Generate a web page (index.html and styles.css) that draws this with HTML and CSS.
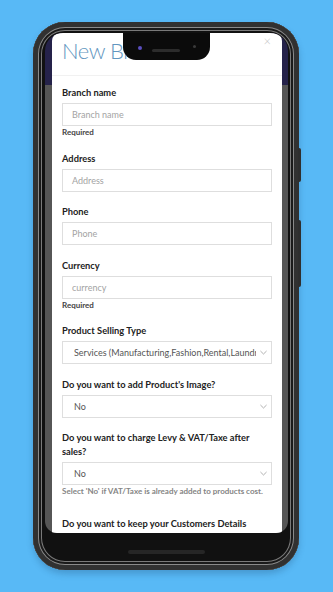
FILE: index.html
```html
<!DOCTYPE html>
<html>
<head>
<meta charset="utf-8">
<link rel="stylesheet" href="styles.css">
</head>
<body>
<div class="stage">
  <div class="phone">
    <span class="btn btn-top"></span>
    <span class="btn btn-bottom"></span>
    <div class="screen">
      <div class="notch">
        <span class="cam"></span>
        <span class="speaker"></span>
        <span class="sensor"></span>
      </div>
      <div class="modal">
        <div class="modal-header">
          <h1 class="title">New Branch</h1>
          <span class="close">×</span>
        </div>
        <div class="modal-body">
          <div class="group">
            <div class="label">Branch name</div>
            <div class="input placeholder">Branch name</div>
            <div class="req">Required</div>
          </div>
          <div class="group">
            <div class="label">Address</div>
            <div class="input placeholder">Address</div>
          </div>
          <div class="group">
            <div class="label">Phone</div>
            <div class="input placeholder">Phone</div>
          </div>
          <div class="group">
            <div class="label">Currency</div>
            <div class="input placeholder">currency</div>
            <div class="req">Required</div>
          </div>
          <div class="group">
            <div class="label">Product Selling Type</div>
            <div class="input select"><span class="val">Services (Manufacturing,Fashion,Rental,Laundry)</span><svg class="chev" viewBox="0 0 8 5" width="7" height="5"><path d="M0.5 0.8 L4 4.2 L7.5 0.8" fill="none" stroke="#9a9a9a" stroke-width="0.9"/></svg></div>
          </div>
          <div class="group">
            <div class="label">Do you want to add Product's Image?</div>
            <div class="input select"><span class="val">No</span><svg class="chev" viewBox="0 0 8 5" width="7" height="5"><path d="M0.5 0.8 L4 4.2 L7.5 0.8" fill="none" stroke="#9a9a9a" stroke-width="0.9"/></svg></div>
          </div>
          <div class="group group-help">
            <div class="label">Do you want to charge Levy &amp; VAT/Taxe after sales?</div>
            <div class="input select"><span class="val">No</span><svg class="chev" viewBox="0 0 8 5" width="7" height="5"><path d="M0.5 0.8 L4 4.2 L7.5 0.8" fill="none" stroke="#9a9a9a" stroke-width="0.9"/></svg></div>
            <div class="help">Select 'No' if VAT/Taxe is already added to products cost.</div>
          </div>
          <div class="group">
            <div class="label">Do you want to keep your Customers Details before selling to them?</div>
            <div class="input select"><span class="val">No</span></div>
          </div>
        </div>
      </div>
    </div>
    <div class="chin"><span class="home"></span></div>
  </div>
</div>
</body>
</html>
```

FILE: styles.css
```css
html, body {
  margin: 0;
  padding: 0;
}
body {
  width: 333px;
  height: 592px;
  overflow: hidden;
  background: #58b9f6;
  font-family: "Lato", "Noto Sans", sans-serif;
}
.stage {
  padding: 22px 0 0 33px;
}
.phone {
  position: relative;
  box-sizing: border-box;
  width: 266px;
  height: 548px;
  border-radius: 32px;
  background: #111;
  padding: 11px 11px 0 12px;
  display: flex;
  flex-direction: column;
  box-shadow:
    inset 0 0 0 5px #313131,
    inset 0 0 0 6px #8a8a8a,
    inset 0 0 0 8px #1a1a1a,
    inset 0 0 0 9px #7a7a7a,
    0 4px 6px rgba(20, 60, 100, 0.25);
}
.btn {
  position: absolute;
  right: -2px;
  width: 3px;
  background: #2e2e2e;
  border-radius: 0 2px 2px 0;
}
.btn-top { top: 126px; height: 34px; }
.btn-bottom { top: 198px; height: 67px; }
.screen {
  position: relative;
  flex: 0 0 500px;
  overflow: hidden;
  border-radius: 18px 18px 12px 12px;
  background: linear-gradient(#25224a 0 52px, #565656 52px);
}
.notch {
  position: absolute;
  top: 0;
  left: 78px;
  width: 87px;
  height: 27px;
  background: #0b0b0b;
  border-radius: 0 0 13px 13px;
  z-index: 2;
}
.cam {
  position: absolute;
  left: 15px;
  top: 13px;
  width: 4px;
  height: 4px;
  border-radius: 50%;
  background: #5a4fc0;
}
.speaker {
  position: absolute;
  left: 29px;
  top: 16px;
  width: 28px;
  height: 3px;
  border-radius: 2px;
  background: #2c2c2c;
}
.sensor {
  position: absolute;
  left: 70px;
  top: 12px;
  width: 3px;
  height: 3px;
  border-radius: 50%;
  background: #3a3a3a;
}
.modal {
  margin: 0 6px 0 7px;
  background: #fff;
  border-radius: 8px 8px 0 0;
  height: 520px;
}
.modal-header {
  position: relative;
  height: 42px;
  padding: 0 10px;
  border-bottom: 1px solid #f1f1f1;
  display: flex;
  align-items: flex-start;
}
.title {
  margin: 0;
  padding-top: 4px;
  font-weight: 300;
  font-size: 22px;
  line-height: 28px;
  color: #6296c0;
  white-space: nowrap;
  letter-spacing: -0.5px;
}
.close {
  position: absolute;
  right: 11px;
  top: 2px;
  font-size: 13px;
  line-height: 13px;
  color: #c4c4c4;
  font-weight: 300;
}
.modal-body {
  padding: 10px 10px 0 10px;
}
.group {
  margin-bottom: 13.5px;
}
.group-help {
  margin-bottom: 20px;
}
.label {
  font-weight: 700;
  font-size: 9.3px;
  line-height: 14px;
  color: #222;
  margin-bottom: 3px;
}
.input {
  box-sizing: border-box;
  height: 23px;
  border: 1px solid #dedede;
  padding: 0 9px;
  font-size: 9px;
  line-height: 21px;
  color: #555;
  white-space: nowrap;
  overflow: hidden;
}
.placeholder {
  color: #a3a3a3;
}
.select {
  display: flex;
  align-items: center;
  padding: 0 4px 0 11px;
}
.select .val {
  flex: 1;
  overflow: hidden;
  white-space: nowrap;
}
.chev {
  flex: none;
  margin-left: 4px;
}
.req {
  margin-top: 1px;
  font-weight: 700;
  font-size: 8px;
  line-height: 11px;
  color: #444;
}
.help {
  margin-top: 1px;
  font-weight: 700;
  font-size: 8px;
  line-height: 11px;
  color: #858585;
  white-space: nowrap;
}
.chin {
  flex: 1;
  display: flex;
  align-items: center;
  justify-content: center;
}
.home {
  width: 77px;
  height: 4px;
  border-radius: 2px;
  background: #262626;
}
```
